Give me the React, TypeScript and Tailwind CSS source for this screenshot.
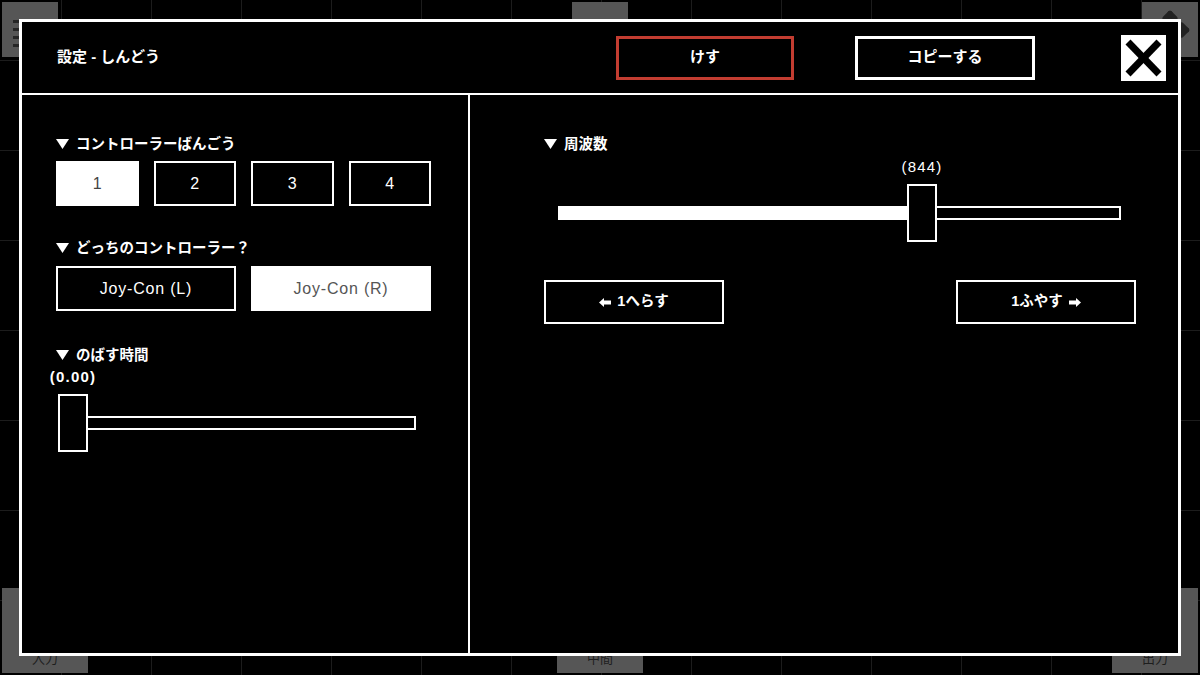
import React from "react";
import { Move } from "lucide-react";

// 背景のブロック（モーダルの下に少しだけ見える）
const BgBlock: React.FC<{ className?: string; children?: React.ReactNode }> = ({
  className = "",
  children,
}) => <div className={`bg-[#565656] ${className}`}>{children}</div>;

const Tri: React.FC = () => (
  <svg width="13" height="10" viewBox="0 0 13 10" className="shrink-0">
    <polygon points="0,0 13,0 6.5,10" fill="white" />
  </svg>
);

const SectionLabel: React.FC<{ text: string }> = ({ text }) => (
  <div className="flex items-center gap-[7px] h-[16px] text-[14.5px] font-bold leading-none text-white">
    <Tri />
    <span>{text}</span>
  </div>
);

const ArrowLeft: React.FC = () => (
  <svg width="12" height="9" viewBox="0 0 12 9">
    <polygon points="0,4.5 5,0 5,9" fill="white" />
    <rect x="4" y="2.5" width="8" height="4" fill="white" />
  </svg>
);

const ArrowRight: React.FC = () => (
  <svg width="12" height="9" viewBox="0 0 12 9">
    <polygon points="12,4.5 7,0 7,9" fill="white" />
    <rect x="0" y="2.5" width="8" height="4" fill="white" />
  </svg>
);

type SliderProps = {
  label: string;
  labelClass?: string;
  width: number;
  thumbLeft: number;
  fill: number;
  className?: string;
};

// スライダー（つまみは線の上に重なる）
const Slider: React.FC<SliderProps> = ({ label, labelClass = "", width, thumbLeft, fill, className = "" }) => (
  <div className={`relative ${className}`} style={{ width }}>
    <div className="relative h-[16px]">
      <span
        className={`absolute top-0 -translate-x-1/2 whitespace-nowrap text-[15px] leading-[16px] tracking-[0.08em] text-white ${labelClass}`}
        style={{ left: thumbLeft + 15 }}
      >
        {label}
      </span>
    </div>
    <div className="relative mt-[9px] flex h-[58px] items-center">
      <div className="flex h-[14px] w-full border-2 border-white">
        <div className="h-full bg-white" style={{ width: fill }} />
      </div>
      <div
        className="absolute top-0 h-[58px] w-[30px] border-2 border-white bg-black"
        style={{ left: thumbLeft }}
      />
    </div>
  </div>
);

const App: React.FC = () => {
  const numbers = ["1", "2", "3", "4"];
  const selected = "1";

  return (
    <div className="relative h-[675px] w-[1200px] overflow-hidden bg-black bg-[linear-gradient(to_right,#1c1c1c_1px,transparent_1px),linear-gradient(to_bottom,#1c1c1c_1px,transparent_1px)] bg-size-[90px_90px] bg-position-[61px_60px] font-['Liberation_Sans','Noto_Sans_CJK_JP',sans-serif]">
      {/* 背景の画面 */}
      <div className="flex h-full flex-col justify-between p-[2px]">
        <div className="flex justify-between">
          <BgBlock className="flex h-[55px] w-[56px] flex-col gap-[5px] px-[11px] pt-[18px]">
            <div className="h-[3px] w-[34px] bg-[#262626]" />
            <div className="h-[3px] w-[34px] bg-[#262626]" />
            <div className="h-[3px] w-[34px] bg-[#262626]" />
            <div className="h-[3px] w-[34px] bg-[#262626]" />
          </BgBlock>
          <BgBlock className="h-[55px] w-[56px]" />
          <BgBlock className="flex h-[55px] w-[56px] items-center justify-center">
            <Move size={40} strokeWidth={3} color="#222" />
          </BgBlock>
        </div>
        <div className="flex justify-between">
          {["入力", "中間", "出力"].map((t) => (
            <BgBlock key={t} className="flex h-[85px] w-[86px] flex-col items-center justify-end pb-[8px]">
              <span className="text-[13px] leading-none text-[#1e1e1e]">{t}</span>
            </BgBlock>
          ))}
        </div>
      </div>

      {/* 設定モーダル */}
      <div className="absolute left-[19px] top-[19px] flex h-[637px] w-[1162px] flex-col border-[3px] border-white bg-black text-white">
        <div className="flex h-[73px] shrink-0 items-center border-b-2 border-white pr-[12px]">
          <div className="flex-1 pl-[35px] text-[15px] font-bold">設定 - しんどう</div>
          <button className="flex h-[44px] w-[178px] items-center justify-center border-[3px] border-[#c33d31] text-[15px] font-bold">
            けす
          </button>
          <button className="ml-[61px] flex h-[44px] w-[180px] items-center justify-center border-[3px] border-white text-[15px] font-bold">
            コピーする
          </button>
          <button className="ml-[86px] flex h-[46px] w-[45px] items-center justify-center bg-white">
            <svg width="45" height="46" viewBox="0 0 45 46">
              <line x1="7" y1="7" x2="38" y2="39" stroke="black" strokeWidth="7" />
              <line x1="38" y1="7" x2="7" y2="39" stroke="black" strokeWidth="7" />
            </svg>
          </button>
        </div>

        <div className="flex flex-1">
          {/* 左の列 */}
          <div className="w-[448px] shrink-0 border-r-2 border-white pl-[34px] pt-[41px]">
            <SectionLabel text="コントローラーばんごう" />
            <div className="mt-[9px] grid w-[375px] grid-cols-4 gap-[15px]">
              {numbers.map((n) => (
                <button
                  key={n}
                  className={`flex h-[45px] items-center justify-center border-2 border-white text-[16px] ${
                    n === selected ? "bg-white text-[#444]" : "text-white"
                  }`}
                >
                  {n}
                </button>
              ))}
            </div>

            <div className="mt-[34px]">
              <SectionLabel text="どっちのコントローラー？" />
            </div>
            <div className="mt-[10px] flex gap-[15px]">
              <button className="flex h-[45px] w-[180px] items-center justify-center border-2 border-white text-[16px] tracking-[0.05em] text-white">
                Joy-Con (L)
              </button>
              <button className="flex h-[45px] w-[180px] items-center justify-center border-2 border-white bg-white text-[16px] tracking-[0.05em] text-[#555]">
                Joy-Con (R)
              </button>
            </div>

            <div className="mt-[36px]">
              <SectionLabel text="のばす時間" />
            </div>
            <Slider
              label="(0.00)"
              labelClass="font-bold"
              width={358}
              thumbLeft={0}
              fill={0}
              className="ml-[2px] mt-[6px]"
            />
          </div>

          {/* 右の列 */}
          <div className="flex-1 pl-[74px] pt-[41px]">
            <SectionLabel text="周波数" />
            <Slider
              label="(844)"
              width={563}
              thumbLeft={349}
              fill={350}
              className="ml-[14px] mt-[7px]"
            />
            <div className="mt-[38px] flex w-[592px] justify-between">
              <button className="flex h-[44px] w-[180px] items-center justify-center gap-[6px] border-2 border-white text-[14.5px] font-bold">
                <ArrowLeft />
                <span>1へらす</span>
              </button>
              <button className="flex h-[44px] w-[180px] items-center justify-center gap-[6px] border-2 border-white text-[14.5px] font-bold">
                <span>1ふやす</span>
                <ArrowRight />
              </button>
            </div>
          </div>
        </div>
      </div>
    </div>
  );
};

export default App;
